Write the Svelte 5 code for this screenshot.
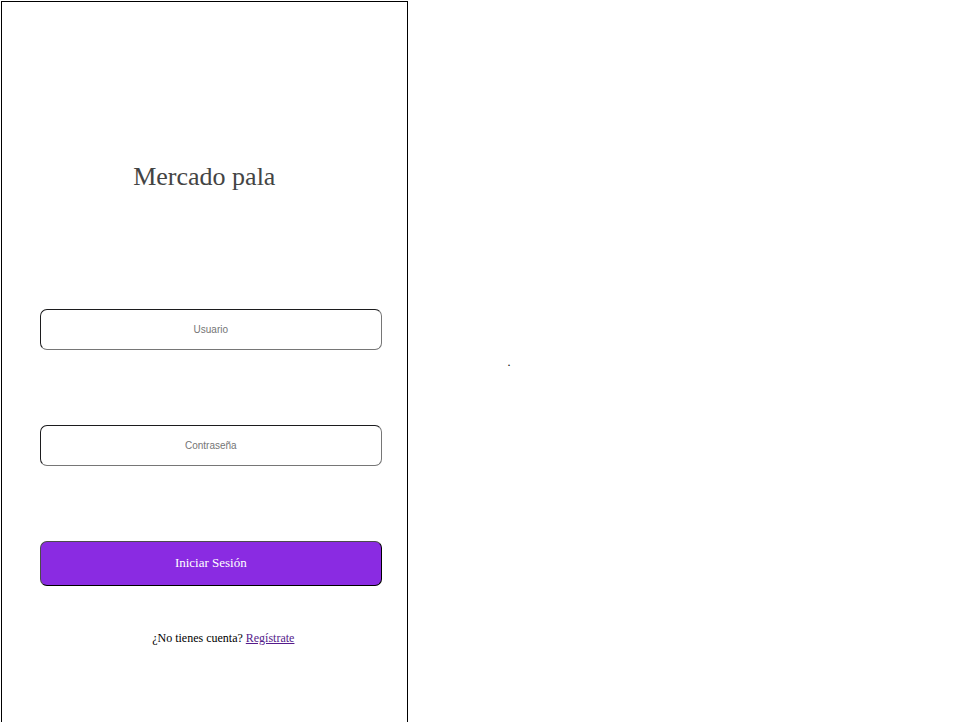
<script>
  let user = $state('');
  let password = $state('');
</script>

<main class="page">
  <section class="panel">
    <h1>Mercado pala</h1>
    <form onsubmit={(e) => e.preventDefault()}>
      <input type="text" placeholder="Usuario" aria-label="Usuario" bind:value={user} />
      <input type="password" placeholder="Contraseña" aria-label="Contraseña" bind:value={password} />
      <button type="submit">Iniciar Sesión</button>
    </form>
    <p class="signup">¿No tienes cuenta? <a href="#registro">Regístrate</a></p>
  </section>
  <aside>.</aside>
</main>

<style>
  :global(body) {
    background: #fff;
    font-family: "Liberation Serif", "Times New Roman", serif;
  }

  .page {
    box-sizing: border-box;
    display: flex;
    min-height: 100vh;
    padding: 1px 0 0 1px;
    gap: 100px;
  }

  .panel {
    box-sizing: border-box;
    width: 42.4%;
    border: 1px solid #000;
    border-bottom: 0;
  }

  h1 {
    margin: 160px 0 117px;
    color: #444;
    font-size: 26px;
    font-weight: 400;
    line-height: 30px;
    text-align: center;
  }

  form {
    display: flex;
    flex-direction: column;
    gap: 75px;
    margin: 0 25px 0 38px;
  }

  input,
  button {
    box-sizing: border-box;
    width: 100%;
    border-radius: 7px;
    text-align: center;
  }

  input {
    height: 41px;
    padding: 0 8px;
    border: 1px solid;
    border-color: #1c1c1e #767676 #767676 #1c1c1e;
    background: #fff;
    color: #222;
    font: 10px "Liberation Sans", Arial, sans-serif;
  }

  input::placeholder {
    color: #757575;
    opacity: 1;
  }

  button {
    height: 45px;
    padding: 0 0 2px;
    border: 1px solid;
    border-color: #4c4c4c #000 #000 #4c4c4c;
    background: blueviolet;
    color: #fff;
    font: 13px "Liberation Serif", "Times New Roman", serif;
  }

  .signup {
    margin: 44px 0 44px 38px;
    font-size: 12px;
    line-height: 16px;
    text-align: center;
  }

  .signup a {
    color: #551a8b;
  }

  aside {
    align-self: center;
    font-size: 12px;
    line-height: 16px;
  }
</style>
